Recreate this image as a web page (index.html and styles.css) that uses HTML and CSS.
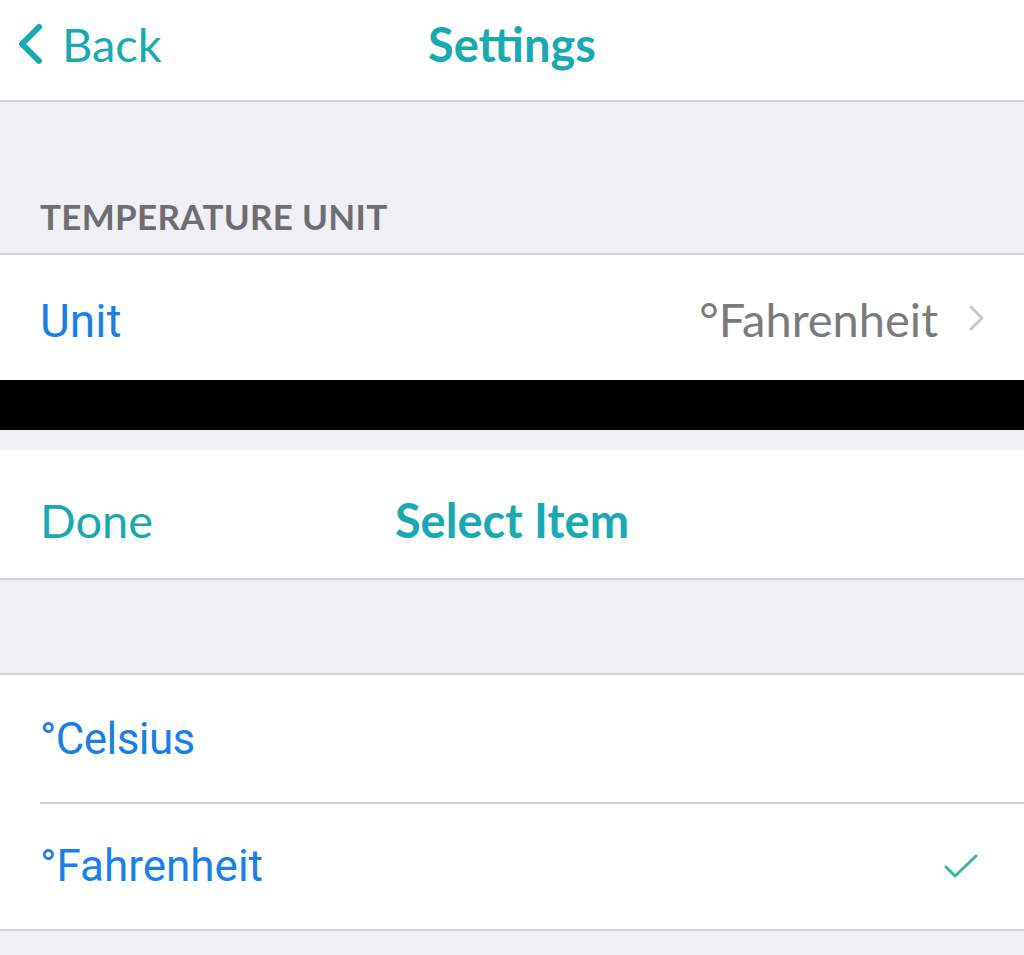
FILE: index.html
```html
<!DOCTYPE html>
<html lang="en">

<head>
    <meta charset="UTF-8">
    <meta name="viewport" content="width=device-width, initial-scale=1.0">
    <title>Settings</title>
    <link rel="stylesheet" href="styles.css">
</head>

<body>
    <header class="navbar">
        <a class="nav-back" href="#">
            <svg class="back-icon" viewBox="0 0 32 42" width="32" height="42">
                <path d="M25 4 L8 21 L25 38" fill="none" stroke="currentColor" stroke-width="6" stroke-linecap="round" stroke-linejoin="round" />
            </svg>
            <span>Back</span>
        </a>
        <h1 class="nav-title">Settings</h1>
    </header>

    <div class="section-header">TEMPERATURE UNIT</div>
    <div class="group unit-group">
        <div class="cell">
            <span class="cell-label">Unit</span>
            <span class="cell-value">°Fahrenheit</span>
            <svg class="disclosure" viewBox="0 0 20 28" width="20" height="28">
                <path d="M5 3 L16 14 L5 25" fill="none" stroke="currentColor" stroke-width="3" stroke-linecap="round" stroke-linejoin="round" />
            </svg>
        </div>
    </div>

    <div class="black-band"></div>
    <div class="gap"></div>

    <header class="navbar picker-bar">
        <a class="nav-done" href="#">Done</a>
        <h2 class="nav-title">Select Item</h2>
    </header>

    <div class="spacer"></div>
    <div class="group">
        <div class="cell option">
            <span class="cell-label">°Celsius</span>
        </div>
        <div class="cell option">
            <span class="cell-label">°Fahrenheit</span>
            <svg class="check" viewBox="0 0 34 26" width="34" height="26">
                <path d="M2 14 L11 23 L32 3" fill="none" stroke="currentColor" stroke-width="3" stroke-linecap="round" stroke-linejoin="round" />
            </svg>
        </div>
    </div>
</body>

</html>
```

FILE: styles.css
```css
body {
    margin: 0;
    background: #efeff4;
    font-family: Lato, 'Open Sans', sans-serif;
    overflow: hidden;
}

a {
    text-decoration: none;
}

.navbar {
    position: relative;
    display: flex;
    align-items: center;
    height: 102px;
    box-sizing: border-box;
    padding-bottom: 12px;
    background: #fff;
    border-bottom: 2px solid #d2d2d6;
    color: #19a9b3;
}

.nav-back {
    display: flex;
    align-items: center;
    gap: 16px;
    padding-left: 14px;
    color: #19a9b3;
    font-size: 47px;
}

.back-icon {
    display: block;
}

.nav-title {
    position: absolute;
    left: 0;
    right: 0;
    margin: 0;
    text-align: center;
    font-size: 47px;
    font-weight: 700;
    pointer-events: none;
}

.section-header {
    height: 151px;
    box-sizing: border-box;
    display: flex;
    align-items: flex-end;
    padding: 0 40px 16px;
    color: #6d6d72;
    font-size: 35px;
    font-weight: 700;
    letter-spacing: 0.3px;
}

.group {
    background: #fff;
    border-top: 2px solid #d2d2d6;
    border-bottom: 2px solid #d2d2d6;
}

.unit-group {
    border-bottom: none;
}

.cell {
    display: flex;
    align-items: center;
    height: 125px;
    padding: 0 38px 0 40px;
    font-family: Roboto, 'Noto Sans', sans-serif;
    font-size: 44px;
}

.cell-label {
    color: #1a7fe6;
    flex: 1;
}

.unit-group .cell-label {
    padding-top: 6px;
    font-size: 46px;
}

.cell-value {
    color: #7b7b7b;
    font-family: Lato, 'Open Sans', sans-serif;
    font-size: 47px;
    margin-right: 28px;
    padding-top: 2px;
}

.disclosure {
    color: #c7c7cc;
}

.black-band {
    height: 50px;
    background: #000;
}

.gap {
    height: 20px;
}

.picker-bar {
    height: 130px;
    padding-bottom: 0;
    padding-top: 12px;
}

.picker-bar .nav-title {
    top: 0;
    bottom: 0;
    display: flex;
    align-items: center;
    justify-content: center;
    padding-top: 12px;
}

.nav-done {
    padding-left: 40px;
    color: #19a9b3;
    font-size: 47px;
}

.spacer {
    height: 93px;
}

.option {
    height: 127px;
}

.option + .option {
    position: relative;
}

.option + .option::before {
    content: "";
    position: absolute;
    top: 0;
    left: 40px;
    right: 0;
    border-top: 2px solid #d2d2d6;
}

.option:first-child .cell-label {
    letter-spacing: -0.6px;
}

.check {
    color: #3bb3ad;
    margin-right: 8px;
}
```
